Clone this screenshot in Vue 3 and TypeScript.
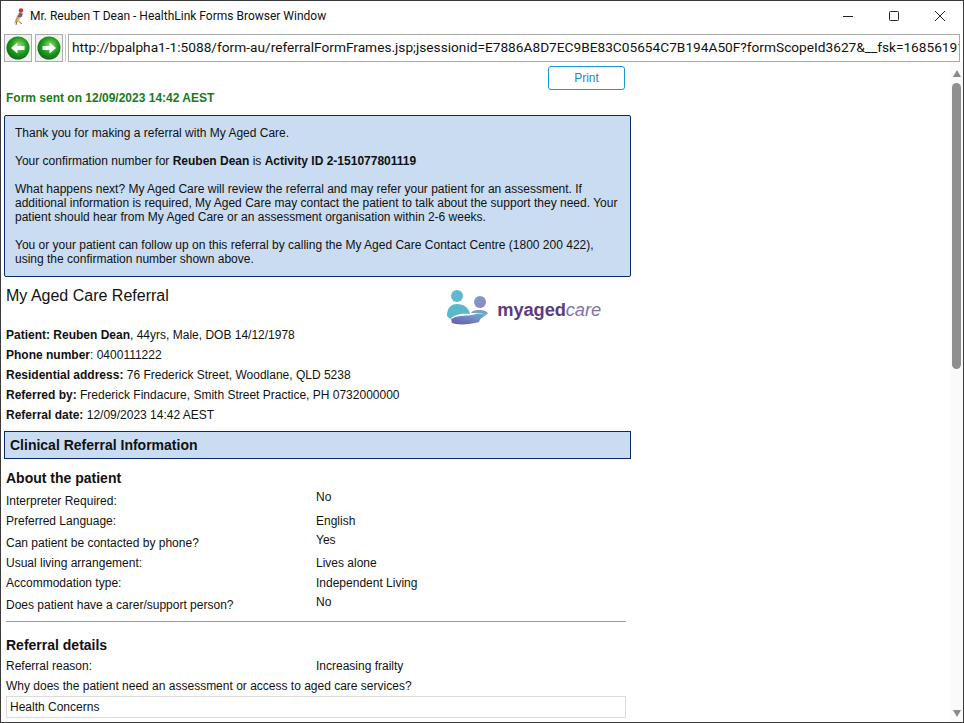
<script setup lang="ts">
interface Row { label: string; value: string; kind?: string }
const aboutRows: Row[] = [
  { label: 'Interpreter Required:', value: 'No', kind: 'tall first' },
  { label: 'Preferred Language:', value: 'English' },
  { label: 'Can patient be contacted by phone?', value: 'Yes', kind: 'tall short' },
  { label: 'Usual living arrangement:', value: 'Lives alone', kind: 'tight' },
  { label: 'Accommodation type:', value: 'Independent Living' },
  { label: 'Does patient have a carer/support person?', value: 'No', kind: 'tall' },
]
const patientRows = [
  { b: 'Patient: ', strong: 'Reuben Dean', t: ', 44yrs, Male, DOB 14/12/1978' },
  { b: 'Phone number', t: ': 0400111222' },
  { b: 'Residential address:', t: ' 76 Frederick Street, Woodlane, QLD 5238' },
  { b: 'Referred by:', t: ' Frederick Findacure, Smith Street Practice, PH 0732000000' },
  { b: 'Referral date:', t: ' 12/09/2023 14:42 AEST' },
]
</script>

<template>
  <div class="window">
    <header class="titlebar">
      <svg class="bird" width="16" height="20" viewBox="0 0 16 20">
        <path d="M9 5 L5 12 L3 18 L7 15 L11 10 Z" fill="#c9a35c" />
        <path d="M8.5 7 L12 7.5 L10.5 11 L6.5 11 Z" fill="#7a4fa0" />
        <path d="M8 11 L10 11 L8 14 L6 14Z" fill="#e0c040" />
        <circle cx="10" cy="4.5" r="2.2" fill="#b8402a" />
        <path d="M7.5 15 L11 18 M6 15 L5 19" stroke="#8a6a3a" stroke-width="1" />
      </svg>
      <span class="title">Mr. Reuben T Dean - HealthLink Forms Browser Window</span>
      <div class="controls">
        <svg width="12" height="12" viewBox="0 0 12 12"><path d="M1 6.5H11" stroke="#222" /></svg>
        <svg width="12" height="12" viewBox="0 0 12 12"><rect x="1.5" y="1.5" width="9" height="9" rx="1" fill="none" stroke="#222" /></svg>
        <svg width="12" height="12" viewBox="0 0 12 12"><path d="M1 1L11 11M11 1L1 11" stroke="#222" /></svg>
      </div>
    </header>

    <div class="toolbar">
      <button class="nav">
        <svg width="24" height="24" viewBox="0 0 24 24">
          <defs>
            <radialGradient id="g" cx="55%" cy="40%" r="65%">
              <stop offset="0" stop-color="#8fe070" />
              <stop offset="0.55" stop-color="#1f9a1f" />
              <stop offset="1" stop-color="#0a6414" />
            </radialGradient>
          </defs>
          <circle cx="12" cy="12" r="11.5" fill="url(#g)" />
          <path d="M5 12 L11.5 6.5 V10 H18.5 V14 H11.5 V17.5 Z" fill="#fff" />
        </svg>
      </button>
      <button class="nav">
        <svg width="24" height="24" viewBox="0 0 24 24">
          <circle cx="12" cy="12" r="11.5" fill="url(#g)" />
          <path d="M19 12 L12.5 6.5 V10 H5.5 V14 H12.5 V17.5 Z" fill="#fff" />
        </svg>
      </button>
      <span class="sep"></span>
      <div class="url">http://bpalpha1-1:5088/form-au/referralFormFrames.jsp;jsessionid=E7886A8D7EC9BE83C05654C7B194A50F?formScopeId3627&amp;__fsk=1685619193</div>
    </div>

    <div class="viewport">
      <main class="page">
        <div class="print-row"><button class="print">Print</button></div>
        <div class="sent">Form sent on 12/09/2023 14:42 AEST</div>

        <section class="notice">
          <p>Thank you for making a referral with My Aged Care.</p>
          <p>Your confirmation number for <b>Reuben Dean</b> is <b>Activity ID 2-151077801119</b></p>
          <p>What happens next? My Aged Care will review the referral and may refer your patient for an assessment. If additional information is required, My Aged Care may contact the patient to talk about the support they need. Your patient should hear from My Aged Care or an assessment organisation within 2-6 weeks.</p>
          <p>You or your patient can follow up on this referral by calling the My Aged Care Contact Centre (1800 200 422), using the confirmation number shown above.</p>
        </section>

        <div class="head-row">
          <h1>My Aged Care Referral</h1>
          <div class="logo">
            <svg width="42" height="36" viewBox="0 0 42 36">
              <defs>
                <linearGradient id="lg" x1="0" y1="1" x2="1" y2="0">
                  <stop offset="0" stop-color="#6a52a6" />
                  <stop offset="0.6" stop-color="#6f8fc4" />
                  <stop offset="1" stop-color="#5ab8c8" />
                </linearGradient>
                <linearGradient id="hd" x1="0" y1="0" x2="1" y2="1">
                  <stop offset="0" stop-color="#6fa8cc" />
                  <stop offset="1" stop-color="#9a7cbc" />
                </linearGradient>
              </defs>
              <circle cx="10" cy="7" r="6" fill="#5fb8cc" />
              <circle cx="33" cy="13" r="6" fill="url(#hd)" />
              <path d="M0 27 C0 18 5 15 10 15 C17 15 22 19 23 25 C15 24 8 25 3 30Z" fill="#5ab8ca" />
              <path d="M24 24 C26 21 29 21 33 21 C37 21 40 22 41 25 L37 25 C33 24 28 24 24 24Z" fill="#7f9cc6" />
              <path d="M4 30 C12 25 22 28 29 25 C33 24 37 26 41 25 C36 28 33 29 32 33 C22 36 10 36 5 34 Z" fill="url(#lg)" />
            </svg>
            <span class="logo-text"><b>myaged</b><i>care</i></span>
          </div>
        </div>

        <div class="patient">
          <div v-for="r in patientRows" :key="r.b" class="pline">
            <b>{{ r.b }}</b><b v-if="r.strong">{{ r.strong }}</b>{{ r.t }}
          </div>
        </div>

        <div class="band">Clinical Referral Information</div>

        <h2 class="about">About the patient</h2>
        <div v-for="r in aboutRows" :key="r.label" class="row" :class="r.kind">
          <span class="lab">{{ r.label }}</span>
          <span class="val">{{ r.value }}</span>
        </div>

        <hr class="rule" />

        <h2 class="details">Referral details</h2>
        <div class="row reason">
          <span class="lab">Referral reason:</span>
          <span class="val">Increasing frailty</span>
        </div>
        <div class="why">Why does the patient need an assessment or access to aged care services?</div>
        <div class="answer">Health Concerns</div>
      </main>

      <aside class="scrollbar">
        <span class="arrow up"></span>
        <span class="thumb"></span>
        <span class="arrow down"></span>
      </aside>
    </div>
  </div>
</template>

<style>
html, body { margin: 0; padding: 0; background: #fff; overflow: hidden; }
</style>

<style scoped>
.window {
  width: 964px;
  height: 723px;
  box-sizing: border-box;
  border: 1px solid #3a3a3a;
  background: #fff;
  display: flex;
  flex-direction: column;
  overflow: hidden;
  font-family: "Liberation Sans", Arial, sans-serif;
  color: #111;
}
.titlebar {
  height: 32px;
  flex: none;
  display: flex;
  align-items: center;
  padding: 0 0 2px 10px;
  box-sizing: border-box;
}
.bird { flex: none; }
.title {
  margin-left: 3px;
  font: 12px Roboto, "Noto Sans", sans-serif;
  color: #111;
}
.controls {
  margin-left: auto;
  display: flex;
  gap: 34px;
  padding-right: 17px;
}
.toolbar {
  height: 29px;
  flex: none;
  display: flex;
  align-items: center;
  padding-left: 3px;
  gap: 3px;
}
.nav {
  width: 28px;
  height: 28px;
  padding: 0;
  box-sizing: border-box;
  background: #f0f0f0;
  border: 1px solid #adadad;
  display: flex;
  align-items: center;
  justify-content: center;
}
.sep {
  width: 1px;
  height: 28px;
  background: #c8c8c8;
  margin-left: -1px;
}
.url {
  margin-left: -1px;
  width: 892px;
  height: 28px;
  box-sizing: border-box;
  border: 1px solid #a9a9a9;
  padding: 0 3px;
  font: 13.7px/25px Roboto, "Noto Sans", sans-serif;
  white-space: nowrap;
  overflow: hidden;
  color: #111;
}
.viewport {
  flex: 1;
  display: flex;
  min-height: 0;
}
.page {
  width: 949px;
  flex: none;
  box-sizing: border-box;
  padding: 4px 0 0 3px;
  font-size: 12px;
  line-height: 14px;
  overflow: hidden;
}
.print-row {
  width: 621px;
  display: flex;
  justify-content: flex-end;
}
.print {
  width: 77px;
  height: 24px;
  box-sizing: border-box;
  background: #fff;
  border: 1px solid #1a9ad0;
  border-radius: 3px;
  color: #1a8ac0;
  font: 12px "Liberation Sans", Arial, sans-serif;
  padding: 0;
}
.sent {
  margin: 1px 0 0 2px;
  height: 14px;
  color: #1a7a1a;
  font-weight: bold;
}
.notice {
  margin-top: 10px;
  width: 627px;
  height: 162px;
  box-sizing: border-box;
  background: #c9dcf2;
  border: 1px solid #0a2a66;
  border-radius: 2px;
  padding: 10px 10px 0;
}
.notice p { margin: 0 0 14px; }
.head-row {
  width: 627px;
  display: flex;
  height: 48px;
}
h1 {
  margin: 10px 0 0 2px;
  font-size: 16px;
  line-height: 18px;
  font-weight: normal;
}
.logo {
  margin-left: auto;
  margin-right: 30px;
  margin-top: 12px;
  display: flex;
  align-items: flex-start;
  gap: 8px;
  height: 36px;
}
.logo-text {
  font-size: 18.3px;
  line-height: 22px;
  margin-top: 10px;
  color: #5a3b84;
  letter-spacing: -0.1px;
}
.logo-text b { font-weight: bold; }
.logo-text i { font-weight: normal; color: #8172ab; }
.patient { margin-left: 2px; height: 100px; }
.pline { height: 20px; line-height: 20px; }
.band {
  width: 627px;
  height: 28px;
  box-sizing: border-box;
  margin-top: 6px;
  background: #c9dcf2;
  border: 1px solid #0a2a66;
  padding-left: 5px;
  font-size: 14px;
  font-weight: bold;
  line-height: 26px;
}
h2 {
  margin: 0 0 0 2px;
  font-size: 14px;
  line-height: 16px;
  font-weight: bold;
}
.about { margin-top: 11px; margin-bottom: 3px; }
.row {
  display: flex;
  margin-left: 2px;
  height: 20px;
  line-height: 20px;
  margin-top: 1px;
}
.row.tall { height: 21px; }
.row.tall.short { height: 20px; }
.row.tight { height: 19px; }
.lab { width: 310px; flex: none; }
.row.tall .val { line-height: 14px; padding-top: 1px; }
.row.tall .lab { line-height: 21px; padding-top: 1px; }
.row.first .lab { padding-top: 2px; }
.rule {
  width: 620px;
  height: 1px;
  border: 0;
  background: #9a9a9a;
  margin: 6px 0 0 2px;
}
.details { margin-top: 15px; margin-bottom: 3px; }
.row.reason { margin-top: 0; height: 20px; }
.why { margin: 0 0 0 2px; height: 20px; line-height: 20px; }
.answer {
  margin: 0 0 0 2px;
  width: 620px;
  height: 22px;
  box-sizing: border-box;
  border: 1px solid #dcdcdc;
  padding-left: 3px;
  line-height: 20px;
}
.scrollbar {
  width: 13px;
  flex: none;
  background: #fafafa;
  position: relative;
  display: flex;
  flex-direction: column;
  align-items: center;
}
.arrow {
  width: 0;
  height: 0;
  border-left: 4.5px solid transparent;
  border-right: 4.5px solid transparent;
}
.arrow.up {
  border-bottom: 7px solid #8a8a8a;
  margin-top: 8px;
}
.thumb {
  width: 9px;
  height: 286px;
  margin-top: 6px;
  background: #8f8f8f;
  border-radius: 5px;
}
.arrow.down {
  margin-top: auto;
  margin-bottom: 5px;
  border-top: 7px solid #8a8a8a;
}
</style>
